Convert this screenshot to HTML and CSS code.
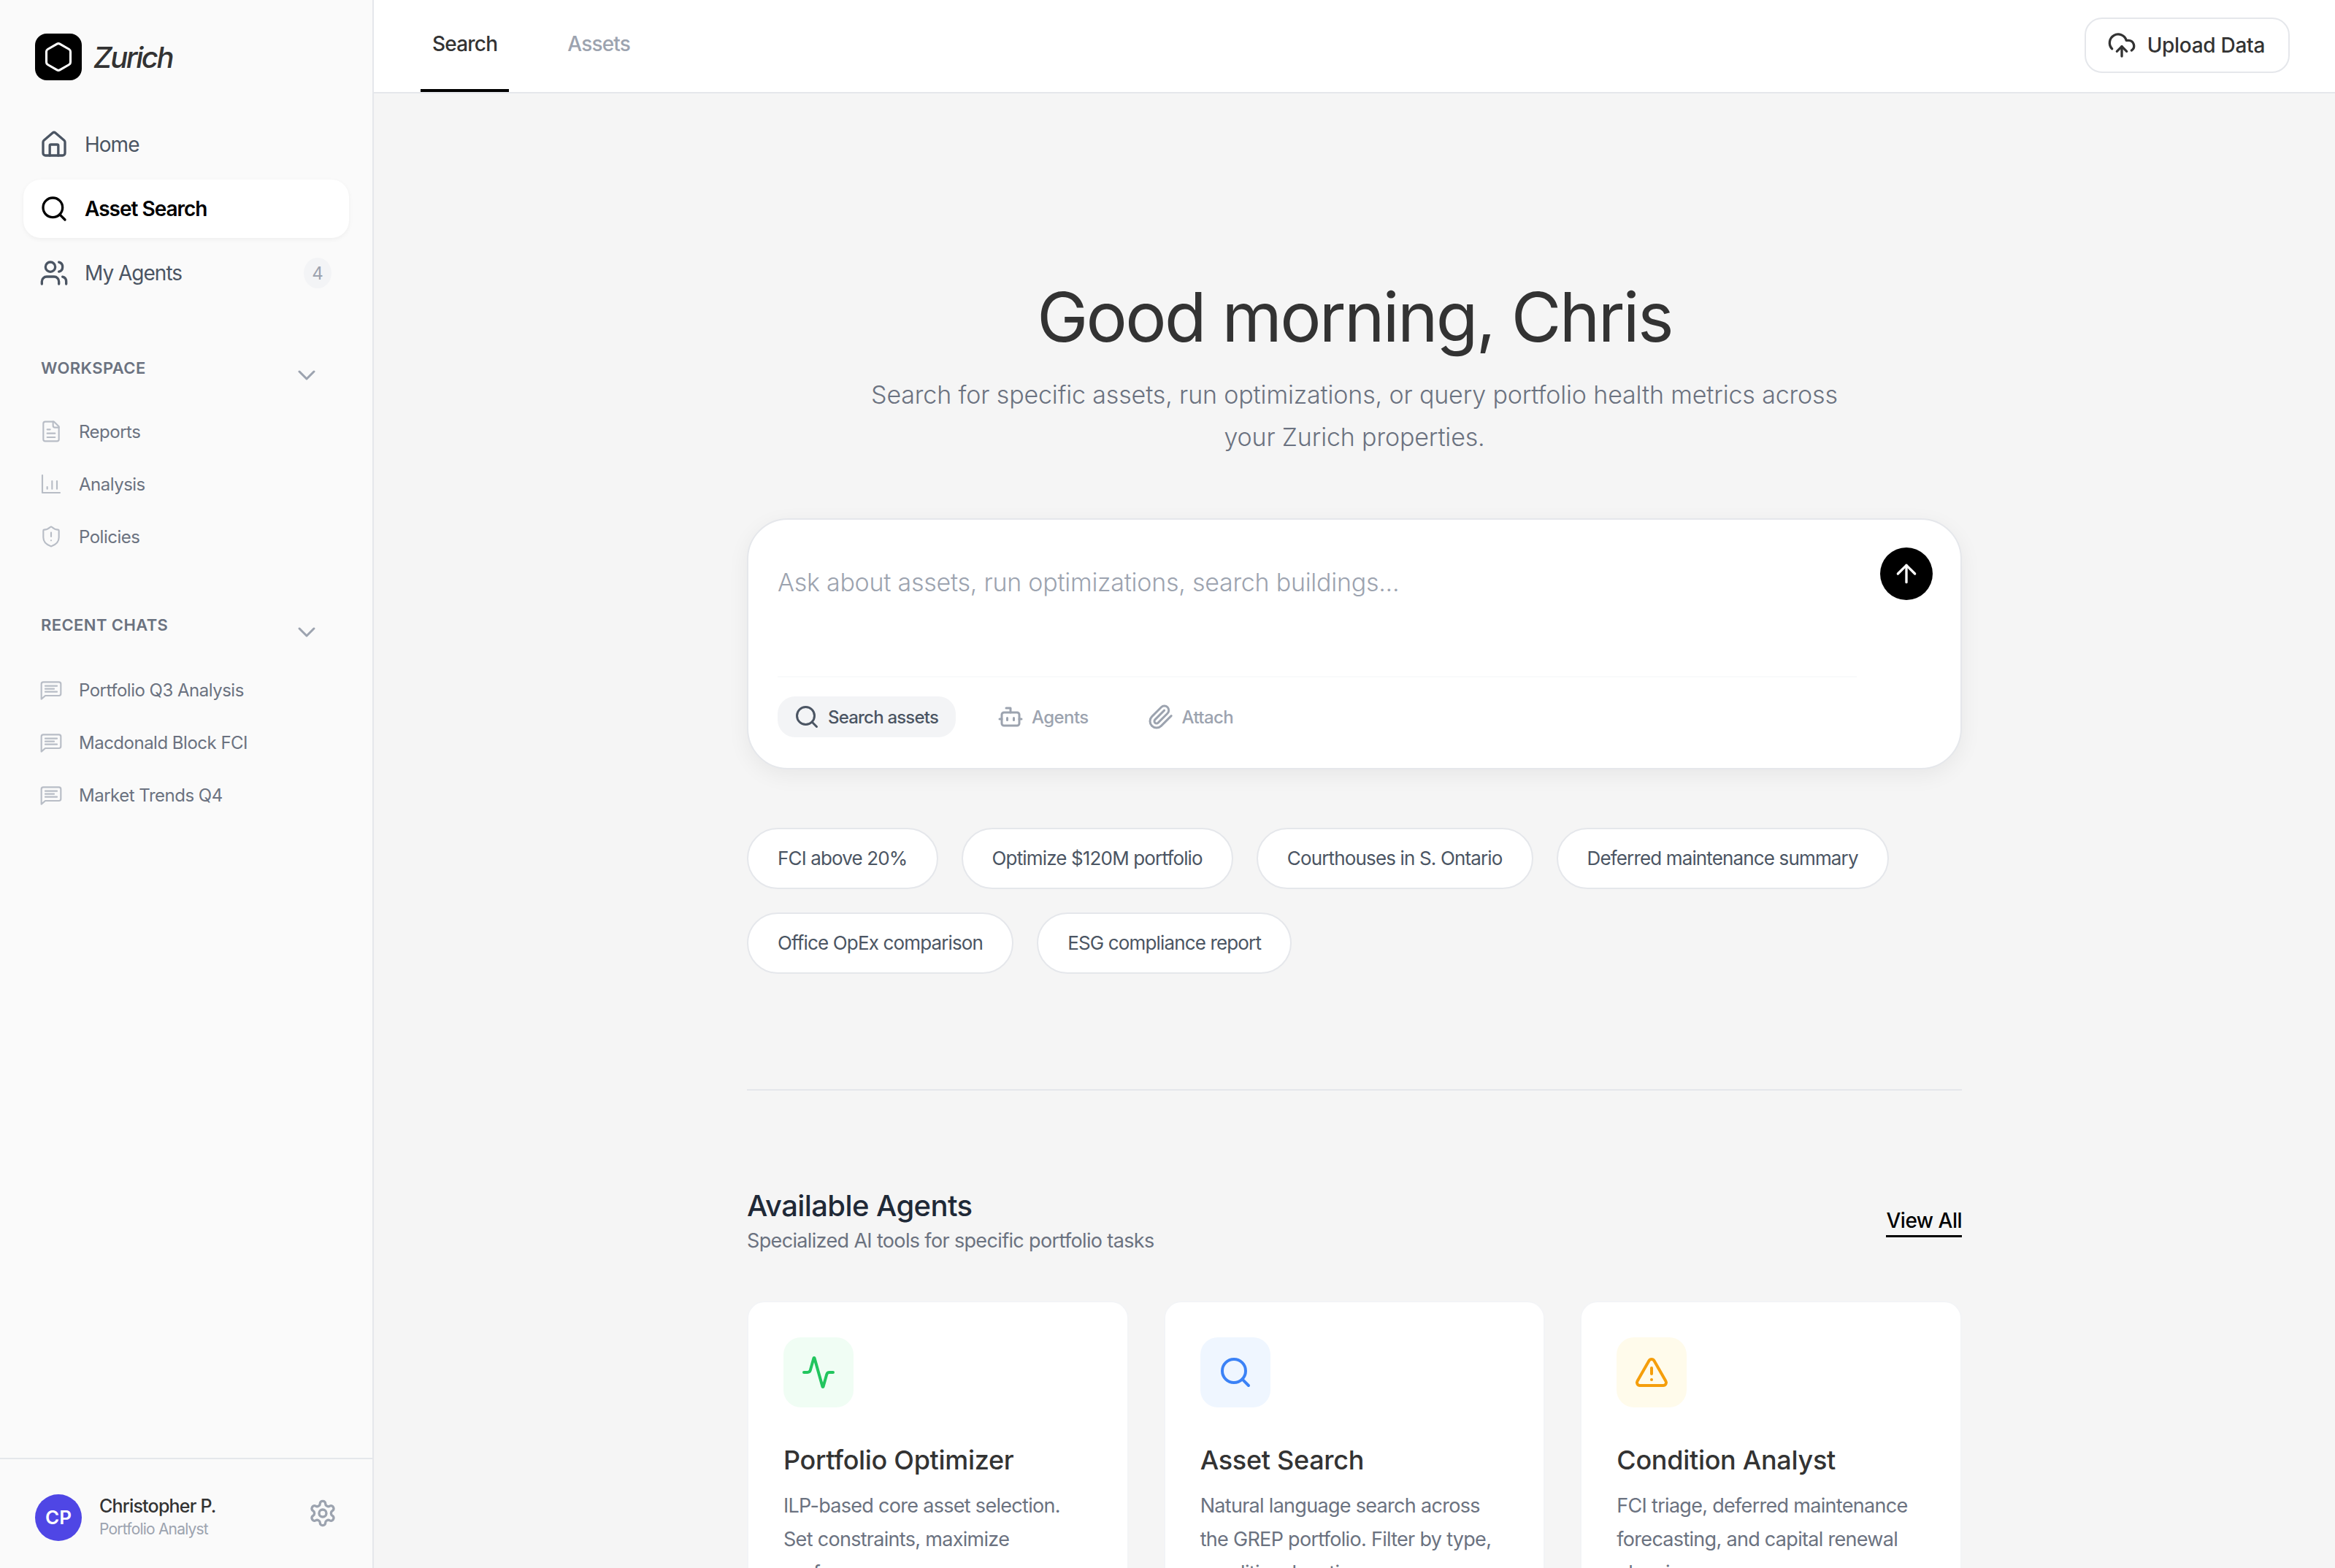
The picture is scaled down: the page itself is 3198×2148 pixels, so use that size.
FILE: index.html
```html
<!DOCTYPE html>
<html lang="en">
<head>
    <meta charset="UTF-8">
    <meta name="viewport" content="width=device-width, initial-scale=1.0">
    <title>Zurich</title>
    <link rel="stylesheet" href="styles.css">
</head>
<body>
    <div class="app">
        <aside class="sidebar">
            <div class="logo">
                <div class="logo-mark">
                    <svg class="logo-hex" viewBox="0 0 24 24"><path d="M21 16V8a2 2 0 0 0-1-1.73l-7-4a2 2 0 0 0-2 0l-7 4A2 2 0 0 0 3 8v8a2 2 0 0 0 1 1.73l7 4a2 2 0 0 0 2 0l7-4A2 2 0 0 0 21 16z"/></svg>
                </div>
                <span class="logo-text">Zurich</span>
            </div>

            <nav class="nav">
                <a class="nav-item">
                    <svg class="icon nav-icon" viewBox="0 0 24 24"><path d="M3 10a2 2 0 0 1 .7-1.5l7-6a2 2 0 0 1 2.6 0l7 6A2 2 0 0 1 21 10v9a2 2 0 0 1-2 2H5a2 2 0 0 1-2-2z"/><path d="M15.5 21v-8a1 1 0 0 0-1-1h-5a1 1 0 0 0-1 1v8"/></svg>
                    Home
                </a>
                <a class="nav-item active">
                    <svg class="icon nav-icon" viewBox="0 0 24 24"><circle cx="11" cy="11" r="8"/><path d="m21 21-4.3-4.3"/></svg>
                    Asset Search
                </a>
                <a class="nav-item">
                    <svg class="icon nav-icon" viewBox="0 0 24 24"><path d="M16 21v-2a4 4 0 0 0-4-4H6a4 4 0 0 0-4 4v2"/><circle cx="9" cy="7" r="4"/><path d="M22 21v-2a4 4 0 0 0-3-3.87"/><path d="M16 3.13a4 4 0 0 1 0 7.75"/></svg>
                    My Agents
                    <span class="badge">4</span>
                </a>
            </nav>

            <div class="side-section">
                <div class="side-head">
                    <span>WORKSPACE</span>
                    <svg class="icon chevron" viewBox="0 0 24 24"><path d="m6 9 6 6 6-6"/></svg>
                </div>
                <a class="side-item">
                    <svg class="icon side-icon" viewBox="0 0 24 24"><path d="M15 2H6a2 2 0 0 0-2 2v16a2 2 0 0 0 2 2h12a2 2 0 0 0 2-2V7z"/><path d="M14 2v4a2 2 0 0 0 2 2h4"/><path d="M8 10h3"/><path d="M8 14h8"/><path d="M8 18h8"/></svg>
                    Reports
                </a>
                <a class="side-item">
                    <svg class="icon side-icon" viewBox="0 0 24 24"><path d="M3 3v18h18"/><path d="M8 17v-2"/><path d="M13 17V9"/><path d="M18 17V9"/></svg>
                    Analysis
                </a>
                <a class="side-item">
                    <svg class="icon side-icon" viewBox="0 0 24 24"><path d="M20 13c0 5-3.5 7.5-7.66 8.95a1 1 0 0 1-.67-.01C7.5 20.5 4 18 4 13V6a1 1 0 0 1 1-1c2 0 4.5-1.2 6.24-2.72a1.17 1.17 0 0 1 1.52 0C14.51 3.81 17 5 19 5a1 1 0 0 1 1 1z"/><path d="M12 8v4"/><path d="M12 16h.01"/></svg>
                    Policies
                </a>
            </div>

            <div class="side-section recent">
                <div class="side-head">
                    <span>RECENT CHATS</span>
                    <svg class="icon chevron" viewBox="0 0 24 24"><path d="m6 9 6 6 6-6"/></svg>
                </div>
                <a class="side-item">
                    <svg class="icon side-icon" viewBox="0 0 24 24"><path d="M22 16a2 2 0 0 1-2 2H6l-4 3.5V6a2 2 0 0 1 2-2h16a2 2 0 0 1 2 2z"/><path d="M6 8h12"/><path d="M6 11h9"/><path d="M6 14h12"/></svg>
                    Portfolio Q3 Analysis
                </a>
                <a class="side-item">
                    <svg class="icon side-icon" viewBox="0 0 24 24"><path d="M22 16a2 2 0 0 1-2 2H6l-4 3.5V6a2 2 0 0 1 2-2h16a2 2 0 0 1 2 2z"/><path d="M6 8h12"/><path d="M6 11h9"/><path d="M6 14h12"/></svg>
                    Macdonald Block FCI
                </a>
                <a class="side-item">
                    <svg class="icon side-icon" viewBox="0 0 24 24"><path d="M22 16a2 2 0 0 1-2 2H6l-4 3.5V6a2 2 0 0 1 2-2h16a2 2 0 0 1 2 2z"/><path d="M6 8h12"/><path d="M6 11h9"/><path d="M6 14h12"/></svg>
                    Market Trends Q4
                </a>
            </div>

            <div class="user">
                <div class="avatar">CP</div>
                <div class="user-info">
                    <div class="user-name">Christopher P.</div>
                    <div class="user-role">Portfolio Analyst</div>
                </div>
                <svg class="icon gear" viewBox="0 0 24 24"><path d="M12.22 2h-.44a2 2 0 0 0-2 2v.18a2 2 0 0 1-1 1.73l-.43.25a2 2 0 0 1-2 0l-.15-.08a2 2 0 0 0-2.73.73l-.22.38a2 2 0 0 0 .73 2.73l.15.1a2 2 0 0 1 1 1.72v.51a2 2 0 0 1-1 1.74l-.15.09a2 2 0 0 0-.73 2.73l.22.38a2 2 0 0 0 2.73.73l.15-.08a2 2 0 0 1 2 0l.43.25a2 2 0 0 1 1 1.73V20a2 2 0 0 0 2 2h.44a2 2 0 0 0 2-2v-.18a2 2 0 0 1 1-1.73l.43-.25a2 2 0 0 1 2 0l.15.08a2 2 0 0 0 2.73-.73l.22-.39a2 2 0 0 0-.73-2.73l-.15-.08a2 2 0 0 1-1-1.74v-.5a2 2 0 0 1 1-1.74l.15-.09a2 2 0 0 0 .73-2.73l-.22-.38a2 2 0 0 0-2.73-.73l-.15.08a2 2 0 0 1-2 0l-.43-.25a2 2 0 0 1-1-1.73V4a2 2 0 0 0-2-2z"/><circle cx="12" cy="12" r="3"/></svg>
            </div>
        </aside>

        <div class="main">
            <header class="topbar">
                <div class="tabs">
                    <a class="tab active">Search</a>
                    <a class="tab">Assets</a>
                </div>
                <button class="upload">
                    <svg class="icon upload-icon" viewBox="0 0 24 24"><path d="M12 13v8"/><path d="M4 14.899A7 7 0 1 1 15.71 8h1.79a4.5 4.5 0 0 1 2.5 8.242"/><path d="m8 17 4-4 4 4"/></svg>
                    Upload Data
                </button>
            </header>

            <main class="content">
                <h1 class="greeting">Good morning, Chris</h1>
                <p class="lead">Search for specific assets, run optimizations, or query portfolio health metrics across<br>your Zurich properties.</p>

                <div class="search-box">
                    <div class="search-left">
                        <div class="placeholder">Ask about assets, run optimizations, search buildings...</div>
                        <div class="tools">
                            <span class="tool active">
                                <svg class="icon tool-icon" viewBox="0 0 24 24"><circle cx="11" cy="11" r="8"/><path d="m21 21-4.3-4.3"/></svg>
                                Search assets
                            </span>
                            <span class="tool">
                                <svg class="icon tool-icon" viewBox="0 0 24 24"><path d="M12 8V4H8"/><rect x="4" y="8" width="16" height="12" rx="2"/><path d="M2 14h2"/><path d="M20 14h2"/><path d="M15 13v2"/><path d="M9 13v2"/></svg>
                                Agents
                            </span>
                            <span class="tool">
                                <svg class="icon tool-icon" viewBox="0 0 24 24"><path d="m21.44 11.05-9.19 9.19a6 6 0 0 1-8.49-8.49l8.57-8.57A4 4 0 1 1 18 8.84l-8.59 8.57a2 2 0 0 1-2.83-2.83l8.49-8.48"/></svg>
                                Attach
                            </span>
                        </div>
                    </div>
                    <button class="send">
                        <svg class="icon send-icon" viewBox="0 0 24 24"><path d="m5 12 7-7 7 7"/><path d="M12 19V5"/></svg>
                    </button>
                </div>

                <div class="chips">
                    <span class="chip">FCI above 20%</span>
                    <span class="chip">Optimize $120M portfolio</span>
                    <span class="chip">Courthouses in S. Ontario</span>
                    <span class="chip">Deferred maintenance summary</span>
                    <span class="chip">Office OpEx comparison</span>
                    <span class="chip">ESG compliance report</span>
                </div>

                <hr class="rule">

                <div class="agents-head">
                    <div>
                        <h2>Available Agents</h2>
                        <p>Specialized AI tools for specific portfolio tasks</p>
                    </div>
                    <a class="view-all">View All</a>
                </div>

                <div class="cards">
                    <div class="card">
                        <div class="card-icon green">
                            <svg class="icon" viewBox="0 0 24 24"><path d="M22 12h-2.48a2 2 0 0 0-1.93 1.46l-2.35 8.36a.25.25 0 0 1-.48 0L9.24 2.18a.25.25 0 0 0-.48 0l-2.35 8.36A2 2 0 0 1 4.49 12H2"/></svg>
                        </div>
                        <h3>Portfolio Optimizer</h3>
                        <p>ILP-based core asset selection. Set constraints, maximize performance.</p>
                    </div>
                    <div class="card">
                        <div class="card-icon blue">
                            <svg class="icon" viewBox="0 0 24 24"><circle cx="11" cy="11" r="8"/><path d="m21 21-4.3-4.3"/></svg>
                        </div>
                        <h3>Asset Search</h3>
                        <p>Natural language search across the GREP portfolio. Filter by type, condition, location.</p>
                    </div>
                    <div class="card">
                        <div class="card-icon amber">
                            <svg class="icon" viewBox="0 0 24 24"><path d="m21.73 18-8-14a2 2 0 0 0-3.48 0l-8 14A2 2 0 0 0 4 21h16a2 2 0 0 0 1.73-3"/><path d="M12 9v4"/><path d="M12 17h.01"/></svg>
                        </div>
                        <h3>Condition Analyst</h3>
                        <p>FCI triage, deferred maintenance forecasting, and capital renewal planning.</p>
                    </div>
                </div>
            </main>
        </div>
    </div>
</body>
</html>
```
FILE: styles.css
```css
* {margin: 0; padding: 0; box-sizing: border-box;}
html, body {height: 100%; overflow: hidden;}
body {
    font-family: Inter, "Liberation Sans", sans-serif;
    background: #f5f5f5;
    color: #333;
}
.icon {
    fill: none;
    stroke: currentColor;
    stroke-width: 2;
    stroke-linecap: round;
    stroke-linejoin: round;
    flex-shrink: 0;
}
.app {display: grid; grid-template-columns: 512px 1fr; height: 100vh;}

/* sidebar */
.sidebar {
    background: #fafafa;
    border-right: 2px solid #e5e7eb;
    display: flex;
    flex-direction: column;
    height: 100%;
}
.logo {display: flex; align-items: center; gap: 16px; padding: 46px 48px 0; height: 110px;}
.logo-mark {
    width: 64px;
    height: 64px;
    border-radius: 16px;
    background: #000;
    display: flex;
    align-items: center;
    justify-content: center;
}
.logo-hex {width: 44px; height: 44px; fill: none; stroke: #fff; stroke-width: 1.7;}
.logo-text {font-size: 40px; font-weight: 500; font-style: italic; letter-spacing: -2.5px;}

.nav {display: flex; flex-direction: column; gap: 8px; padding: 48px 32px 0;}
.nav-item {
    display: flex;
    align-items: center;
    gap: 22px;
    height: 80px;
    padding: 0 24px 0 22px;
    border-radius: 24px;
    font-size: 28px;
    letter-spacing: -1px;
    color: #4b5563;
}
.nav-item.active {
    background: #fff;
    color: #000;
    font-weight: 600;
    box-shadow: 0 2px 6px rgba(0,0,0,0.05);
}
.nav-icon {width: 40px; height: 40px;}
.badge {
    margin-left: auto;
    width: 38px;
    height: 42px;
    border-radius: 50%;
    background: #f3f4f6;
    color: #9ca3af;
    font-size: 24px;
    letter-spacing: 0;
    display: flex;
    align-items: center;
    justify-content: center;
}

.side-section {padding: 79px 56px 0;}
.side-section.recent {padding-top: 74px;}
.side-head {
    display: flex;
    justify-content: space-between;
    align-items: flex-start;
    height: 62px;
    padding-right: 14px;
    font-size: 22px;
    line-height: 22px;
    font-weight: 600;
    letter-spacing: 0.4px;
    color: #6b7280;
}
.recent .side-head {height: 64px;}
.chevron {width: 40px; height: 40px; color: #9ca3af; margin-top: 1px; stroke-width: 1.8;}
.side-item {
    display: flex;
    align-items: center;
    gap: 22px;
    height: 72px;
    margin-left: -2px;
    font-size: 24px;
    letter-spacing: -0.5px;
    color: #6b7280;
}
.side-icon {width: 32px; height: 32px; color: #b8bdc6; stroke-width: 1.6;}

.user {
    margin-top: auto;
    border-top: 2px solid #e5e7eb;
    height: 151px;
    display: flex;
    align-items: center;
    gap: 24px;
    padding: 10px 48px 0;
}
.avatar {
    width: 64px;
    height: 64px;
    border-radius: 50%;
    background: #4f46e5;
    color: #fff;
    font-size: 26px;
    font-weight: 600;
    display: flex;
    align-items: center;
    justify-content: center;
}
.user-info {flex: 1;}
.user-name {font-size: 25px; font-weight: 500; line-height: 32px; letter-spacing: -0.8px;}
.user-role {font-size: 21px; color: #9ca3af; line-height: 32px; letter-spacing: -0.8px;}
.gear {width: 40px; height: 40px; color: #9ca3af; margin-top: -12px;}

/* top bar */
.main {display: flex; flex-direction: column; min-width: 0; height: 100%; overflow: hidden;}
.topbar {
    background: #fff;
    border-bottom: 2px solid #e5e7eb;
    height: 128px;
    flex-shrink: 0;
    display: flex;
    align-items: center;
    justify-content: space-between;
    padding: 0 62px 2px 64px;
}
.tabs {display: flex; gap: 64px; height: 126px; align-self: flex-start;}
.tab {
    padding: 0 16px;
    height: 126px;
    line-height: 120px;
    font-size: 28px;
    font-weight: 500;
    letter-spacing: -0.8px;
    color: #9ca3af;
}
.tab.active {color: #333; border-bottom: 4px solid #000;}
.upload {
    display: flex;
    align-items: center;
    gap: 15px;
    height: 76px;
    padding: 0 32px 0 29px;
    background: #fff;
    border: 2px solid #e5e7eb;
    border-radius: 24px;
    font: 500 28px Inter, "Liberation Sans", sans-serif;
    letter-spacing: -0.3px;
    color: #333;
}
.upload-icon {width: 40px; height: 40px;}

/* centre column */
.content {width: 1664px; margin: 0 auto; flex: 1;}
.greeting {
    margin-top: 250px;
    text-align: center;
    font-size: 94px;
    line-height: 112px;
    font-weight: 400;
    letter-spacing: -2.7px;
}
.lead {
    margin-top: 22px;
    text-align: center;
    font-size: 34px;
    line-height: 58px;
    font-weight: 300;
    letter-spacing: -0.15px;
    color: #6b7280;
}
.search-box {
    margin-top: 82px;
    height: 344px;
    background: #fff;
    border: 2px solid #e5e7eb;
    border-radius: 56px;
    box-shadow: 0 8px 30px rgba(0,0,0,0.06);
    display: flex;
    gap: 32px;
    padding: 38px 38px 0 40px;
}
.search-left {flex: 1; min-width: 0;}
.placeholder {
    font-size: 34px;
    font-weight: 300;
    line-height: 96px;
    height: 178px;
    letter-spacing: -0.25px;
    color: #9ca3af;
    border-bottom: 2px solid #f9fafb;
}
.tools {display: flex; gap: 35px; margin-top: 26px;}
.tool {
    display: flex;
    align-items: center;
    gap: 11px;
    height: 56px;
    padding: 0 24px 0 22px;
    border-radius: 24px;
    font-size: 24px;
    font-weight: 500;
    letter-spacing: -0.6px;
    color: #9ca3af;
}
.tool.active {background: #f3f4f6; color: #4b5563; letter-spacing: -0.8px;}
.tool-icon {width: 36px; height: 36px;}
.send {
    width: 72px;
    height: 72px;
    border: none;
    border-radius: 50%;
    background: #000;
    color: #fff;
    display: flex;
    align-items: center;
    justify-content: center;
}
.send-icon {width: 40px; height: 40px;}

.chips {display: flex; flex-wrap: wrap; gap: 32px; margin-top: 80px;}
.chip {
    height: 84px;
    line-height: 80px;
    padding: 0 40px;
    background: #fff;
    border: 2px solid #e5e7eb;
    border-radius: 42px;
    font-size: 26px;
    letter-spacing: -0.85px;
    color: #4b5563;
}
.rule {border: none; border-top: 2px solid #e5e7eb; margin-top: 158px;}

.agents-head {
    display: flex;
    justify-content: space-between;
    align-items: center;
    margin-top: 130px;
}
.agents-head h2 {font-size: 40px; line-height: 56px; font-weight: 500; letter-spacing: -0.6px; color: #1f2937;}
.agents-head p {font-size: 27px; line-height: 40px; letter-spacing: -0.65px; color: #6b7280;}
.view-all {
    font-size: 28px;
    font-weight: 500;
    letter-spacing: -0.5px;
    color: #000;
    border-bottom: 3px solid #000;
    line-height: 40px;
    margin-top: 2px;
}
.cards {display: grid; grid-template-columns: repeat(3, 1fr); gap: 48px; margin-top: 62px;}
.card {
    background: #fff;
    border: 2px solid #f3f4f6;
    border-radius: 24px;
    padding: 48px;
}
.card-icon {
    width: 96px;
    height: 96px;
    border-radius: 24px;
    display: flex;
    align-items: center;
    justify-content: center;
}
.card-icon svg {width: 48px; height: 48px;}
.card-icon.green {background: #f0fdf4; color: #22c55e;}
.card-icon.blue {background: #eff6ff; color: #3b82f6;}
.card-icon.amber {background: #fffbeb; color: #f59e0b;}
.card h3 {margin-top: 46px; font-size: 36px; line-height: 52px; font-weight: 500; letter-spacing: -0.3px;}
.card p {margin-top: 14px; font-size: 27px; line-height: 46px; letter-spacing: -0.7px; color: #6b7280;}
```
